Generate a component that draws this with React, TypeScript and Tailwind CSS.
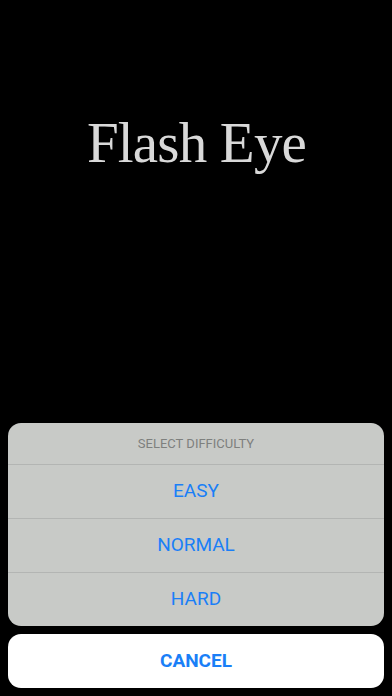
import React from "react";

export default function App() {
  const rows = ["EASY", "NORMAL", "HARD"];
  return (
    <div className="w-[392px] h-[696px] bg-black flex flex-col overflow-hidden">
      <div className="pt-[114px] flex justify-center">
        <h1
          className="text-[57px] leading-none text-[#d9d9d9] tracking-[-0.8px] pl-[1px]"
          style={{ fontFamily: '"Liberation Serif", "DejaVu Serif", serif' }}
        >
          Flash Eye
        </h1>
      </div>
      <div className="flex-1" />
      <div
        className="px-2 pb-2 flex flex-col gap-2"
        style={{ fontFamily: 'Roboto, "Liberation Sans", sans-serif' }}
      >
        <div className="rounded-[13px] bg-[#c8cac7] overflow-hidden">
          <div className="h-[41px] flex items-center justify-center text-[13px] text-[#7e807e] pt-[1px]">
            SELECT DIFFICULTY
          </div>
          {rows.map((r) => (
            <div
              key={r}
              className="h-[54px] border-t border-[#b3b5b3] flex items-center justify-center text-[19px] text-[#1a7ff7]"
            >
              {r}
            </div>
          ))}
        </div>
        <div className="h-[54px] rounded-[13px] bg-white flex items-center justify-center text-[19px] font-bold text-[#1a7ff7]">
          CANCEL
        </div>
      </div>
    </div>
  );
}
